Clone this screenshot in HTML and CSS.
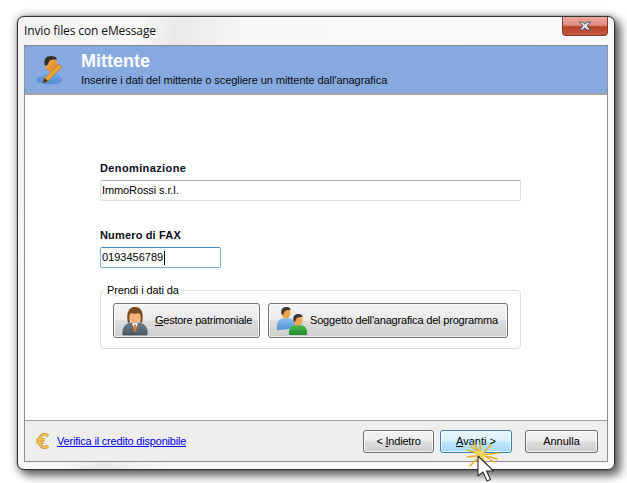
FILE: index.html
```html
<!DOCTYPE html>
<html lang="it">
<head>
<meta charset="utf-8">
<title>Invio files con eMessage</title>
<link rel="stylesheet" href="styles.css">
</head>
<body>
<div class="window">
  <div class="titlebar">
    <span class="title">Invio files con eMessage</span>
    <div class="close">
      <svg width="16" height="10" viewBox="0 0 16 10"><path d="M2.5 1h3l2.500 2.200L10 1h3.500L10 5l3.500 4H10L7.800 6.800 5.500 9h-3L6 5z" fill="#e8ebf0" stroke="#4a5260" stroke-width="1"/></svg>
    </div>
  </div>
  <div class="panel">
    <header class="head">
      <svg class="head-icon" width="32" height="32" viewBox="0 0 32 32">
        <defs>
          <linearGradient id="skin" x1="0" y1="0" x2="1" y2="1"><stop offset="0" stop-color="#f7b45c"/><stop offset="1" stop-color="#e07f1c"/></linearGradient>
          <linearGradient id="shirt" x1="0" y1="0" x2="0" y2="1"><stop offset="0" stop-color="#6fb4ee"/><stop offset="1" stop-color="#4f8bd0"/></linearGradient>
        </defs>
        <ellipse cx="14" cy="26" rx="13" ry="4.500" fill="#5f90d6"/>
        <path d="M5 27c0-6 4-9 8-9h5c5 0 7 3 7 8l-9 4z" fill="url(#shirt)"/>
        <ellipse cx="16" cy="10" rx="6" ry="7.500" fill="url(#skin)"/>
        <path d="M10 12C8 5 11 2 16 2c4 0 6 1.500 6 3.500-3 0-7 0-8 2l-1 3z" fill="#33302e"/>
        <path d="M8 29l1.500-5L24 10l3 3L13 27z" fill="#e9a33c" stroke="#b56f16" stroke-width=".7"/>
        <path d="M8 29l1.500-5 3.500 3z" fill="#3a3026"/>
      </svg>
      <div class="head-text">
        <h1 class="head-title">Mittente</h1>
        <p class="head-sub">Inserire i dati del mittente o scegliere un mittente dall'anagrafica</p>
      </div>
    </header>
    <main class="body">
      <label class="field-label field-label-first">Denominazione</label>
      <div class="input input-wide input-name">ImmoRossi s.r.l.</div>
      <label class="field-label field-label-next">Numero di FAX</label>
      <div class="input input-short input-focus">0193456789<span class="caret"></span></div>
      <fieldset class="group">
        <legend class="group-legend">Prendi i dati da</legend>
        <div class="group-row">
          <button class="btn btn-icon btn-manager" type="button">
            <svg width="26" height="30" viewBox="0 0 26 30">
              <defs>
                <linearGradient id="suit" x1="0" y1="0" x2="0" y2="1"><stop offset="0" stop-color="#6e7e8e"/><stop offset="1" stop-color="#4b5866"/></linearGradient>
              </defs>
              <path d="M1 29c-1-7 2-11 8-12h8c6 1 9 5 8 12z" fill="url(#suit)" stroke="#3d4650" stroke-width=".6"/>
              <path d="M10 17h6l-3 8z" fill="#f4f4f0"/>
              <path d="M12 18.500h2l.6 5-1.600 3-1.600-3z" fill="#e8791c"/>
              <ellipse cx="13" cy="9" rx="6.500" ry="7.500" fill="#f3b27a"/>
              <path d="M6 17C4 8 6 1 13 1s9 6 7 16l-2-1c1-4 1-7-1-9-3 1-6 1-8 0-2 2-2 5-1 9z" fill="#7c4a22"/>
            </svg>
            <span class="btn-label btn-label-manager"><u>G</u>estore patrimoniale</span>
          </button>
          <button class="btn btn-icon btn-subject" type="button">
            <svg width="32" height="30" viewBox="0 0 32 30">
              <defs>
                <linearGradient id="blue" x1="0" y1="0" x2="0" y2="1"><stop offset="0" stop-color="#8cc2f0"/><stop offset="1" stop-color="#4f90d8"/></linearGradient>
                <linearGradient id="green" x1="0" y1="0" x2="0" y2="1"><stop offset="0" stop-color="#4fbb4f"/><stop offset="1" stop-color="#1d8a2e"/></linearGradient>
              </defs>
              <path d="M1 21c0-6 3-9 7-9h4c4 0 7 3 7 8l-6 3-12 1z" fill="url(#blue)"/>
              <ellipse cx="10" cy="7" rx="4.500" ry="5.500" fill="#f0a450"/>
              <path d="M5.500 8C4.500 3 7 1 10 1c3 0 5 1.500 4.500 3-3 0-5 0-6 1.500L7 9z" fill="#3a3632"/>
              <path d="M13 29c-1-6 2-10 7-10h4c5 0 8 4 7 10z" fill="url(#green)"/>
              <ellipse cx="22" cy="14" rx="4.500" ry="5.500" fill="#f0a450"/>
              <path d="M17.500 15c-1-5 1.500-7 4.500-7 3 0 5 1.500 4.500 3-3 0-5 0-6 1.500L19 16z" fill="#3a3632"/>
            </svg>
            <span class="btn-label btn-label-subject">Soggetto dell'anagrafica del programma</span>
          </button>
        </div>
      </fieldset>
    </main>
    <footer class="foot">
      <svg class="euro" width="15" height="16" viewBox="0 0 15 16"><path d="M13 3.200C12 2 10.800 1.500 9.500 1.500 6.500 1.500 4.500 4.500 4.500 8s2 6.500 5 6.500c1.300 0 2.500-.5 3.500-1.700M1.500 6.500h8.500M1.500 9.500h7.500" fill="none" stroke="#b98a2e" stroke-width="3.200"/><path d="M13 3.200C12 2 10.800 1.500 9.500 1.500 6.500 1.500 4.500 4.500 4.500 8s2 6.500 5 6.500c1.300 0 2.500-.5 3.500-1.700M1.500 6.500h8.500M1.500 9.500h7.500" fill="none" stroke="#f6c65a" stroke-width="1.800"/></svg>
      <a class="link" href="#">Verifica il credito disponibile</a>
      <div class="nav">
        <button class="btn btn-nav btn-back" type="button">&lt; <u>I</u>ndietro</button>
        <button class="btn btn-nav btn-next btn-hot" type="button"><u>A</u>vanti &gt;</button>
        <button class="btn btn-nav btn-cancel" type="button">Annulla</button>
      </div>
    </footer>
  </div>
</div>
<svg class="pointer" width="40" height="44" viewBox="0 0 40 44">
  <g stroke="#eab021" stroke-width="1.500" stroke-linecap="round">
    <path d="M5 17L36 13M8 6L32 22M18 3L19 28M29 5L8 26M12 4L26 27M5 10L35 19"/>
  </g>
  <circle cx="18" cy="15" r="4" fill="#f8d95a"/>
  <path d="M16 16v20l5-4 4 9 3.500-1.500-4-8.500h7z" fill="#fff" stroke="#333" stroke-width="1.100" stroke-linejoin="round"/>
</svg>
</body>
</html>
```
FILE: styles.css
```css
* { box-sizing: border-box; }
html, body { margin: 0; padding: 0; }
body {
  width: 627px;
  height: 483px;
  overflow: hidden;
  background: #fff;
  position: relative;
  padding: 16px 0 0 17px;
  font-family: "Liberation Sans", Arial, sans-serif;
  font-size: 11px;
  color: #000;
}
.window {
  width: 598px;
  height: 454px;
  border: 1px solid #333;
  border-radius: 7px;
  padding: 0 6px 7px;
  background: linear-gradient(100deg, #f3f3f3 0%, #f8f8f8 18%, #e9e9e9 24%, #f7f7f7 34%, #fafafa 100%);
  box-shadow: 0 0 1px #000, 5px 5px 10px 1px rgba(0, 0, 0, .55), 0 0 10px rgba(0, 0, 0, .3);
  display: flex;
  flex-direction: column;
}
.titlebar {
  height: 28px;
  flex: none;
  display: flex;
  justify-content: space-between;
  align-items: flex-start;
}
.title {
  font-family: "Open Sans", sans-serif;
  font-size: 12px;
  letter-spacing: -.12px;
  line-height: 16px;
  padding-top: 6px;
  color: #111;
}
.close {
  width: 46px;
  height: 19px;
  border: 1px solid #7d3a30;
  border-top: 0;
  border-radius: 0 0 4px 4px;
  background: linear-gradient(#eca99f 0%, #e08c80 45%, #b83f27 55%, #c95a3e 100%);
  display: flex;
  align-items: center;
  justify-content: center;
}
.panel {
  flex: 1;
  border: 1px solid #8f8f8f;
  border-top-color: #888;
  display: flex;
  flex-direction: column;
  background: #fff;
}
.head {
  height: 49px;
  flex: none;
  background: #86a9e0;
  border-bottom: 2px solid #a0a4a8;
  display: flex;
  align-items: center;
  padding-left: 10px;
  gap: 14px;
}
.head-text { display: flex; flex-direction: column; }
.head-title {
  margin: 0;
  font-size: 18px;
  line-height: 18px;
  font-weight: 700;
  color: #fff;
}
.head-sub {
  margin: 3px 0 0;
  line-height: 14px;
  letter-spacing: -.06px;
  color: #0a0a0a;
}
.body {
  flex: 1;
  padding: 66px 87px 0 75px;
  display: flex;
  flex-direction: column;
}
.field-label {
  font-weight: 700;
  line-height: 14px;
  margin-bottom: 5px;
  color: #0c0c20;
}
.field-label-first { letter-spacing: .38px; }
.field-label-next { margin-top: 27px; letter-spacing: .16px; }
.input {
  height: 21px;
  border: 1px solid #d8dde2;
  border-top-color: #a8adb2;
  border-radius: 2px;
  padding-left: 1px;
  line-height: 19px;
  background: #fff;
  display: flex;
  align-items: center;
}
.input-wide { width: 421px; }
.input-name { letter-spacing: -.1px; }
.input-short { width: 121px; }
.input-focus { border-color: #80b0dc; border-top-color: #4a8cc4; }
.caret { width: 1px; height: 14px; background: #000; margin-left: 1px; }
.group {
  width: 421px;
  height: 66px;
  margin: 15px 0 0;
  padding: 0 12px;
  border: 1px solid #d5dfe8;
  border-radius: 4px;
  min-width: 0;
}
.group-legend {
  padding: 0 2px;
  margin-left: -8px;
  letter-spacing: -.1px;
  line-height: 14px;
}
.group-row {
  display: flex;
  gap: 8px;
  margin-top: 6px;
}
.btn {
  font-family: inherit;
  font-size: 11px;
  color: #000;
  white-space: nowrap;
  border: 1px solid #707070;
  border-radius: 3px;
  background: linear-gradient(#f3f3f3 0%, #ebebeb 48%, #dcdcdc 52%, #cfcfcf 100%);
  box-shadow: inset 0 0 0 1px rgba(255, 255, 255, .7);
  padding: 0;
}
.btn-icon {
  height: 35px;
  display: flex;
  align-items: center;
  flex: none;
}
.btn-label { margin-top: -2px; }
.btn-label-manager { letter-spacing: -.25px; }
.btn-label-subject { letter-spacing: -.18px; }
.btn-manager { width: 147px; padding-left: 8px; gap: 7px; }
.btn-subject { width: 240px; padding-left: 7px; gap: 2px; }
.foot {
  height: 41px;
  flex: none;
  background: #eee;
  border-top: 1px solid #a0a0a0;
  display: flex;
  align-items: center;
  padding-left: 10px;
}
.euro { margin-right: 7px; }
.link { color: #0000ee; text-decoration: underline; letter-spacing: -.19px; }
.nav {
  margin-left: auto;
  margin-right: 9px;
  display: flex;
}
.btn-nav { height: 23px; }
.btn-back { width: 71px; margin-right: 6px; letter-spacing: -.2px; }
.btn-next { width: 72px; margin-right: 13px; }
.btn-cancel { width: 73px; }
.btn-hot {
  border-color: #3c7fb1;
  background: linear-gradient(#eaf6fd 0%, #d9f0fc 48%, #bee6fd 52%, #a7d9f5 100%);
}
.pointer {
  position: absolute;
  left: 462px;
  top: 440px;
}
```
